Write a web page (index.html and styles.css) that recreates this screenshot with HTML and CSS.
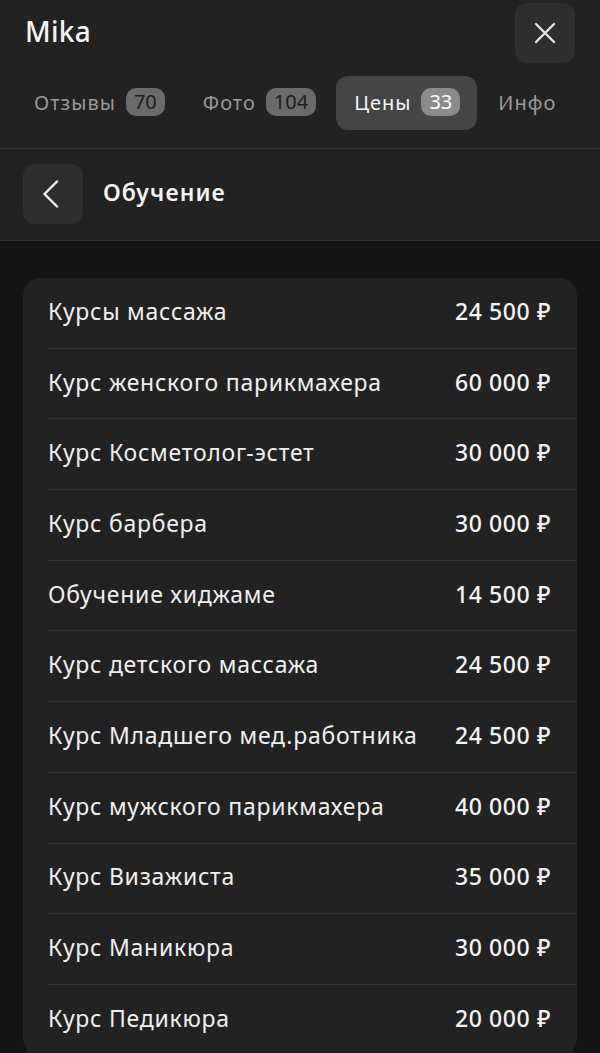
FILE: index.html
```html
<!DOCTYPE html>
<html lang="ru">
<head>
<meta charset="utf-8">
<link rel="stylesheet" href="styles.css">
</head>
<body>
<div class="page">
  <header class="top">
    <div class="title-row">
      <h1 class="title">Mika</h1>
      <button class="icon-btn close-btn" aria-label="Закрыть">
        <svg width="24" height="24" viewBox="0 0 24 24"><path d="M3 3 L21 21 M21 3 L3 21" stroke="#e6e6e6" stroke-width="2.4" stroke-linecap="round" fill="none"/></svg>
      </button>
    </div>
    <nav class="tabs">
      <div class="tab"><span>Отзывы</span><span class="badge">70</span></div>
      <div class="tab"><span>Фото</span><span class="badge">104</span></div>
      <div class="tab active"><span>Цены</span><span class="badge">33</span></div>
      <div class="tab"><span>Инфо</span></div>
    </nav>
  </header>
  <div class="sub">
    <button class="icon-btn back-btn" aria-label="Назад">
      <svg width="24" height="28" viewBox="0 0 24 28"><path d="M16 1.5 L3.5 14 L16 26.5" stroke="#f0f0f0" stroke-width="2.4" stroke-linecap="round" stroke-linejoin="round" fill="none"/></svg>
    </button>
    <h2 class="sub-title">Обучение</h2>
  </div>
  <main class="content">
    <div class="card">
      <div class="row"><span class="name">Курсы массажа</span><span class="price">24 500 ₽</span></div>
      <div class="row"><span class="name">Курс женского парикмахера</span><span class="price">60 000 ₽</span></div>
      <div class="row"><span class="name">Курс Косметолог-эстет</span><span class="price">30 000 ₽</span></div>
      <div class="row"><span class="name">Курс барбера</span><span class="price">30 000 ₽</span></div>
      <div class="row"><span class="name">Обучение хиджаме</span><span class="price">14 500 ₽</span></div>
      <div class="row"><span class="name">Курс детского массажа</span><span class="price">24 500 ₽</span></div>
      <div class="row"><span class="name">Курс Младшего мед.работника</span><span class="price">24 500 ₽</span></div>
      <div class="row"><span class="name">Курс мужского парикмахера</span><span class="price">40 000 ₽</span></div>
      <div class="row"><span class="name">Курс Визажиста</span><span class="price">35 000 ₽</span></div>
      <div class="row"><span class="name">Курс Маникюра</span><span class="price">30 000 ₽</span></div>
      <div class="row"><span class="name">Курс Педикюра</span><span class="price">20 000 ₽</span></div>
    </div>
  </main>
</div>
</body>
</html>
```

FILE: styles.css
```css
* { box-sizing: border-box; }
html, body { margin: 0; padding: 0; }
body {
  background: #151515;
  font-family: "Noto Sans", "Open Sans", sans-serif;
  color: #f2f2f2;
  width: 600px;
  height: 1053px;
  overflow: hidden;
}
.top {
  background: #222222;
  border-bottom: 1px solid #333333;
  height: 149px;
  padding: 3px 25px 0 16px;
}
.title-row {
  display: flex;
  justify-content: space-between;
  align-items: flex-start;
  height: 60px;
}
.title {
  margin: 10px 0 0 9px;
  font-size: 28px;
  font-weight: 500;
  line-height: 36px;
  letter-spacing: 0.3px;
  color: #f4f4f4;
}
.icon-btn {
  width: 60px;
  height: 60px;
  border: none;
  border-radius: 12px;
  background: #2e2e2e;
  display: flex;
  align-items: center;
  justify-content: center;
  padding: 0;
}
.tabs {
  display: flex;
  gap: 3px;
  margin-top: 13px;
}
.tab {
  display: flex;
  align-items: center;
  gap: 10px;
  height: 54px;
  padding: 0 17px 2px 18px;
  border-radius: 12px;
  font-size: 20px;
  letter-spacing: 1px;
  color: #9a9a9a;
}
.tab.active {
  background: #454545;
  color: #f6f6f6;
}
.badge {
  display: inline-flex;
  align-items: center;
  justify-content: center;
  height: 28px;
  min-width: 38px;
  padding: 0 8px 1px;
  border-radius: 10px;
  background: #6b6b6b;
  color: #1d1d1d;
  font-size: 20px;
  letter-spacing: 0;
}
.tab.active .badge {
  background: #8b8b8b;
  color: #ffffff;
}
.sub {
  background: #222222;
  border-bottom: 1px solid #333333;
  height: 92px;
  display: flex;
  align-items: center;
  padding: 0 23px 1px;
  gap: 20px;
}
.sub-title {
  margin: 0 0 4px;
  font-size: 23px;
  font-weight: 600;
  letter-spacing: 1.1px;
  color: #f4f4f4;
}
.content {
  padding: 37px 23px 0;
}
.card {
  background: #222222;
  border-radius: 18px;
  padding-left: 25px;
}
.row {
  display: flex;
  justify-content: space-between;
  align-items: center;
  height: 70.7px;
  padding: 0 26px 4px 0;
  border-bottom: 1px solid #333333;
  font-size: 23px;
  letter-spacing: 0.75px;
}
.row:last-child { border-bottom: none; }
.name { color: #f0f0f0; }
.price { color: #f4f4f4; font-weight: 500; letter-spacing: 0.6px; }
```
